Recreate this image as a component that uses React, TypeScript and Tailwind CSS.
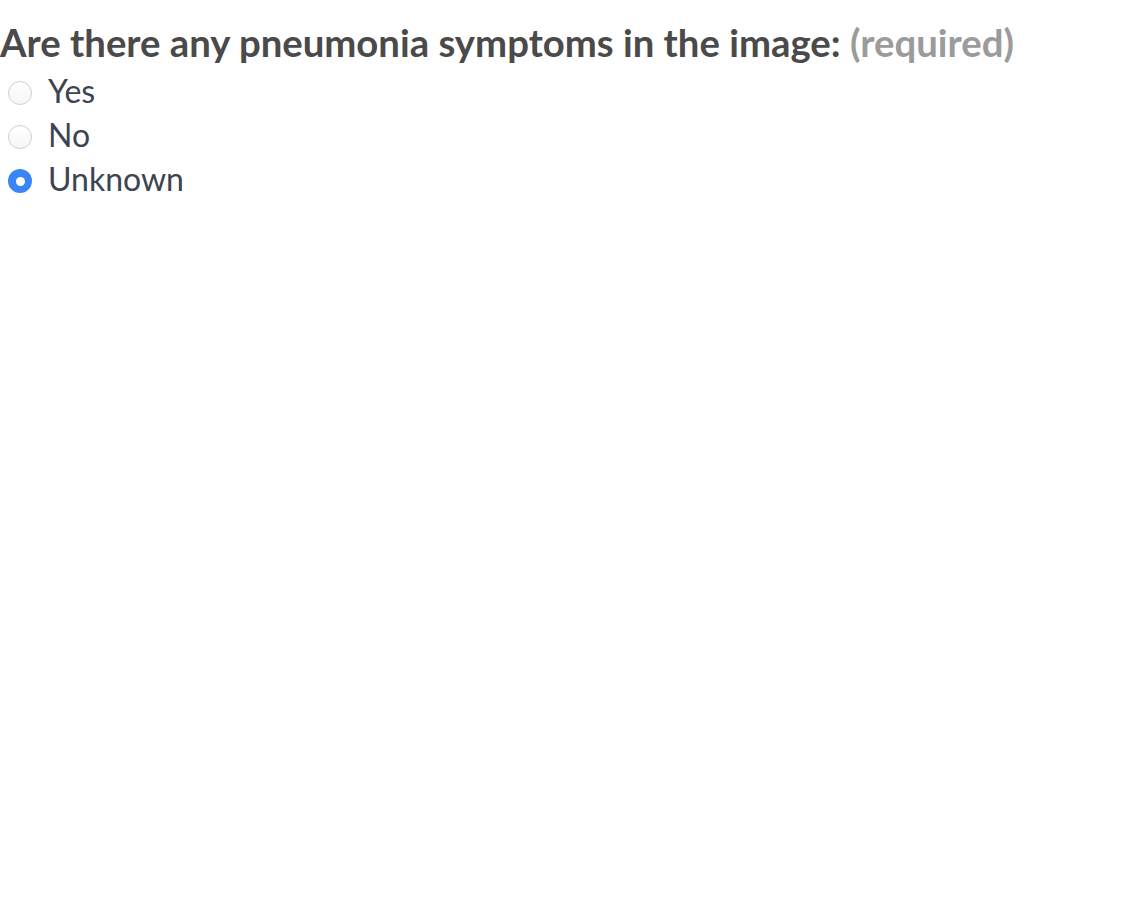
import { useState } from "react";

const options = ["Yes", "No", "Unknown"];

export default function App() {
  const [value, setValue] = useState("Unknown");

  return (
    <div className="bg-white min-h-screen" style={{ fontFamily: "Lato, 'Noto Sans', sans-serif" }}>
      <div className="text-[38.3px] leading-[46px] font-bold text-[#4a4a4a] pt-[19px]">
        Are there any pneumonia symptoms in the image: <span className="text-[#9b9b9b]">(required)</span>
      </div>
      <div className="flex flex-col mt-[4px]">
        {options.map((opt) => (
          <label key={opt} className="flex items-center h-[44px] cursor-pointer" onClick={() => setValue(opt)}>
            <span className="w-[40px] flex justify-center pt-[4px]">
              {value === opt ? (
                <span className="w-[24px] h-[24px] rounded-full bg-[#3a84f7] flex items-center justify-center">
                  <span className="w-[9px] h-[9px] rounded-full bg-white" />
                </span>
              ) : (
                <span className="w-[24px] h-[24px] rounded-full border border-[#cfcfcf] bg-gradient-to-b from-white to-[#f6f6f6]" />
              )}
            </span>
            <span className="ml-[8px] text-[32px] text-[#3d4451]">{opt}</span>
          </label>
        ))}
      </div>
    </div>
  );
}
